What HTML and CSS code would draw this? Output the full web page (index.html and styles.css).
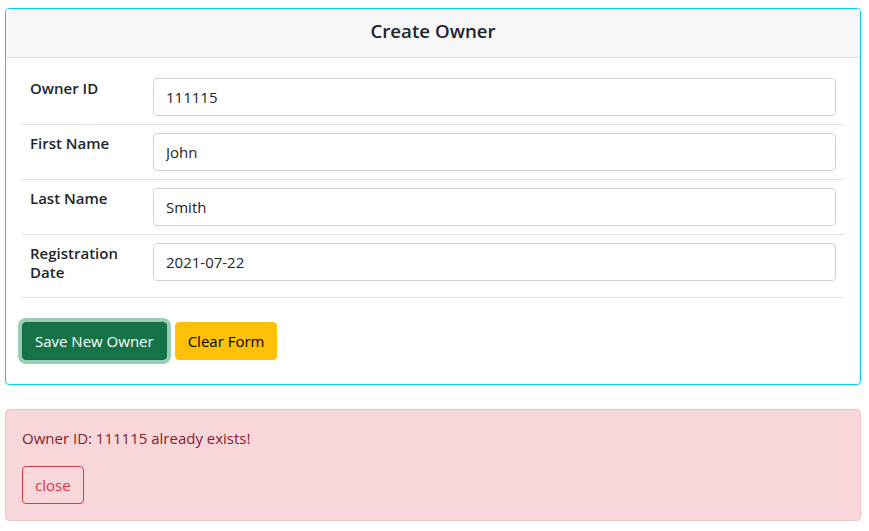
FILE: index.html
```html
<!DOCTYPE html>
<html lang="en">
<head>
<meta charset="utf-8">
<title>Create Owner</title>
<link rel="stylesheet" href="styles.css">
</head>
<body>
<div class="page">
  <section class="card">
    <header class="card-header"><h5 class="card-title">Create Owner</h5></header>
    <div class="card-body">
      <table class="form-table">
        <colgroup><col class="label-col"><col></colgroup>
        <tr>
          <th><h6 class="field-label">Owner ID</h6></th>
          <td><input class="form-control" type="text" value="111115"></td>
        </tr>
        <tr>
          <th><h6 class="field-label">First Name</h6></th>
          <td><input class="form-control" type="text" value="John"></td>
        </tr>
        <tr>
          <th><h6 class="field-label">Last Name</h6></th>
          <td><input class="form-control" type="text" value="Smith"></td>
        </tr>
        <tr>
          <th><h6 class="field-label">Registration Date</h6></th>
          <td><input class="form-control" type="text" value="2021-07-22"></td>
        </tr>
      </table>
      <div class="actions">
        <button class="btn btn-success focused" type="button">Save New Owner</button>
        <button class="btn btn-warning" type="button">Clear Form</button>
      </div>
    </div>
  </section>
  <div class="alert">
    <p class="alert-text">Owner ID: 111115 already exists!</p>
    <button class="btn btn-outline-danger" type="button">close</button>
  </div>
</div>
</body>
</html>
```
FILE: styles.css
```css
* { box-sizing: border-box; }
html, body { margin: 0; padding: 0; background: #fff; }
body {
  font-family: "Open Sans", "Noto Sans", "Liberation Sans", sans-serif;
  font-size: 15px;
  line-height: 24px;
  color: #212529;
}
.page {
  padding: 8px 8px 0 5px;
  width: 869px;
}
.card {
  width: 856px;
  border: 1px solid #0dcaf0;
  border-radius: 4px;
  overflow: hidden;
}
.card-header {
  background: #f7f7f7;
  border-bottom: 1px solid #dcdcdc;
  height: 49px;
  padding-bottom: 4px;
  display: flex;
  align-items: center;
  justify-content: center;
}
.card-title {
  margin: 0;
  font-size: 18.7px;
  font-weight: 600;
  line-height: 1.2;
}
.card-body {
  padding: 12px 16px 24px;
}
.form-table {
  width: 100%;
  table-layout: fixed;
  border-collapse: collapse;
  margin-bottom: 24px;
}
.label-col { width: 123px; }
.form-table tr { border-bottom: 1px solid #dee2e6; }
.form-table th {
  padding: 8px;
  text-align: left;
  vertical-align: top;
}
.form-table td { padding: 8px; vertical-align: top; }
.field-label {
  margin: 1px 0 7px;
  font-size: 15px;
  font-weight: 600;
  line-height: 19.2px;
}
.form-control {
  display: block;
  width: 100%;
  height: 38px;
  padding: 6px 12px;
  font: inherit;
  color: #212529;
  border: 1px solid #ced4da;
  border-radius: 4px;
  background: #fff;
}
.actions { display: flex; gap: 8px; }
.btn {
  font: inherit;
  height: 38px;
  padding: 6px 12px;
  border-radius: 4px;
  border: 1px solid transparent;
  cursor: pointer;
}
.btn-success { background: #157347; border-color: #146c43; color: #fff; }
.focused { box-shadow: 0 0 0 4px rgba(60, 153, 110, 0.5); }
.btn-warning { background: #ffc107; border-color: #ffc107; color: #000; }
.alert {
  width: 856px;
  margin-top: 24px;
  padding: 16px;
  background: #f8d7da;
  border: 1px solid #f5c2c7;
  border-radius: 4px;
  color: #842029;
}
.alert-text { margin: 0 0 16px; }
.btn-outline-danger {
  background: transparent;
  border-color: #dc3545;
  color: #dc3545;
}
```
